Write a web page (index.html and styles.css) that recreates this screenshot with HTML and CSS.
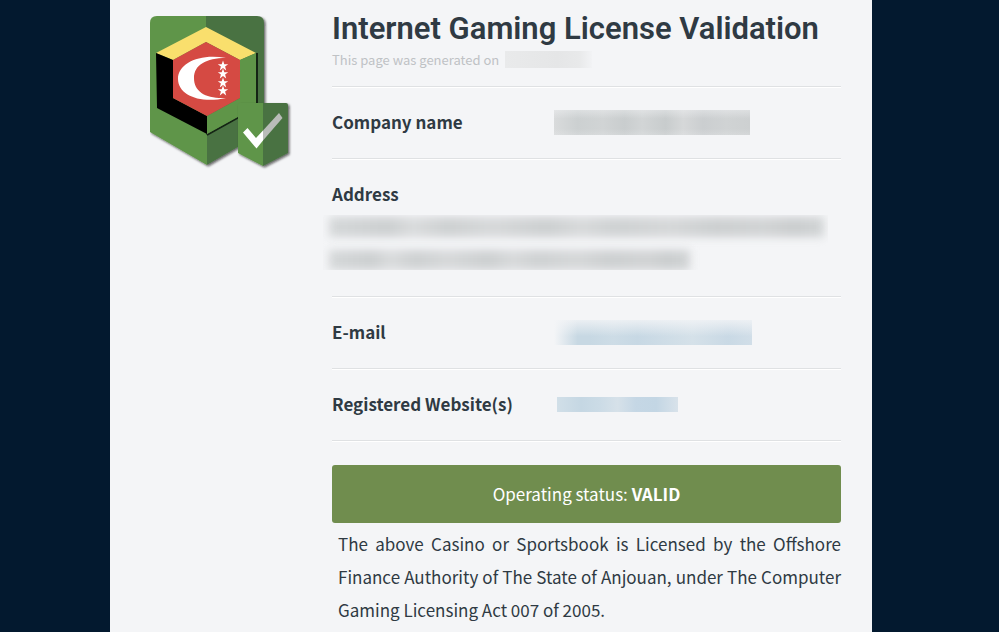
FILE: index.html
```html
<!DOCTYPE html>
<html lang="en">
<head>
  <meta charset="UTF-8">
  <meta name="viewport" content="width=device-width, initial-scale=1.0">
  <title>Internet Gaming License Validation</title>
  <link rel="stylesheet" href="styles.css">
</head>
<body>
  <div class="page">
    <aside class="seal">
      <svg viewBox="0 0 150 160" width="150" height="160" role="img" aria-label="Verified license seal">
        <defs>
          <filter id="shadow" x="-10%" y="-10%" width="125%" height="125%">
            <feDropShadow dx="1.5" dy="1.5" stdDeviation="1.2" flood-color="#111" flood-opacity=".65"/>
          </filter>
          <clipPath id="shield"><path d="M7 0H107Q114 0 114 7V116L57 149L0 116V7Q0 0 7 0Z"/></clipPath>
          <path id="star" d="M0-5.4L1.3-1.7H5.2L2.1.6L3.2 4.4L0 2.1L-3.2 4.4L-2.1.6L-5.2-1.7H-1.3Z"/>
        </defs>
        <!-- shield -->
        <g filter="url(#shadow)">
          <g clip-path="url(#shield)">
            <path d="M0 0H57V149H0Z" fill="#5f9548"/>
            <path d="M56 0H114V116L57 149V119H56Z" fill="#4a7243"/>
          </g>
        </g>
        <!-- cube -->
        <path d="M57 119L107 91V37" fill="none" stroke="#142414" stroke-width="2"/>
        <path d="M56 11L106 37L90 44L56 26L23 44L6 37Z" fill="#f9df6d"/>
        <path d="M6 37L23 44V82L57 100V118L7 92Z" fill="#000"/>
        <path d="M106 37L90 44V82L57 100V118L106 91Z" fill="#5f9548"/>
        <path d="M56 26L90 44V82L57 100L23 82V44Z" fill="#d54a43"/>
        <path d="M76 42C50 37 28 47 28 63C28 79 50 88 76 82C56 83 44 76 44 62C44 49 56 42 76 42Z" fill="#fff"/>
        <g fill="#fff">
          <use href="#star" x="73" y="50"/><use href="#star" x="73" y="58"/>
          <use href="#star" x="73" y="67"/><use href="#star" x="73" y="75"/>
        </g>
        <!-- check badge -->
        <g filter="url(#shadow)">
          <path d="M90 87H113V150L88 137V89Q88 87 90 87Z" fill="#5f9548"/>
          <path d="M113 87H136Q138 87 138 89V137L113 150Z" fill="#4a7243"/>
        </g>
        <path d="M113 114.500L129 97L132.500 102L113 124.500Z" fill="#b9bcb9"/>
        <path d="M93 116.500L97.500 112L106 122L113 114.500V124.500L106.500 132.500Z" fill="#fff"/>
      </svg>
    </aside>

    <main class="content">
      <header class="intro">
        <h1>Internet Gaming License Validation</h1>
        <p>This page was generated on <span class="mask mask-date"></span></p>
      </header>

      <dl class="details">
        <div class="row">
          <dt>Company name</dt>
          <dd><span class="mask mask-name"></span></dd>
        </div>
        <div class="row row-stacked">
          <dt>Address</dt>
          <dd class="mask-address">
            <span class="mask-line"></span>
            <span class="mask-line short"></span>
          </dd>
        </div>
        <div class="row">
          <dt>E-mail</dt>
          <dd><span class="mask mask-email"></span></dd>
        </div>
        <div class="row">
          <dt>Registered Website(s)</dt>
          <dd><span class="mask mask-site"></span></dd>
        </div>
      </dl>

      <div class="status">Operating status: <strong>VALID</strong></div>
      <p class="notice">The above Casino or Sportsbook is Licensed by the Offshore Finance Authority of The State of Anjouan, under The Computer Gaming Licensing Act 007 of 2005.</p>
    </main>
  </div>
</body>
</html>
```
FILE: styles.css
```css
* {
  box-sizing: border-box;
}
body {
  margin: 0;
  padding: 0 17px 0 0;
  background-color: #03192f;
  color: #2f3a43;
  font-family: "Noto Sans CJK SC", "Noto Sans", sans-serif;
  font-size: 17px;
  line-height: 33px;
}
.page {
  display: flex;
  max-width: 762px;
  min-height: 100vh;
  margin: 0 auto;
  padding: 0 31px 0 40px;
  background-color: #f4f5f7;
}
.seal {
  flex: 0 0 182px;
  padding-top: 16px;
}
.seal svg {
  display: block;
}
.content {
  flex: 1;
  min-width: 0;
}
.intro {
  padding: 9px 0 16px;
}
h1 {
  margin: 0;
  font-family: Roboto, sans-serif;
  font-size: 31px;
  font-weight: 600;
  line-height: 40px;
  white-space: nowrap;
}
.intro p {
  display: flex;
  align-items: center;
  margin: 0;
  color: #bfc2c5;
  font-size: 13px;
  line-height: 21px;
}
.intro,
.row {
  border-bottom: 1px solid #dfe1e3;
  box-shadow: 0 1px #fff;
}
.details {
  margin: 0;
}
.row {
  display: flex;
  padding: 18px 0 20px;
}
dt {
  flex: 0 0 222px;
  font-weight: bold;
}
dd {
  display: flex;
  align-items: center;
  margin: 0;
  padding-top: 2px;
}
.row-stacked {
  display: block;
}

/* hidden values */
.mask {
  height: 25px;
}
.mask-date {
  width: 87px;
  height: 17px;
  margin-left: 6px;
  background: linear-gradient(90deg, #e9eaeb, #e5e6e7 60%, #e8e9ea 85%, #f2f3f5);
}
.mask-name {
  width: 196px;
  background:
    linear-gradient(#f4f5f766, #f4f5f700 35%, #f4f5f700 75%, #f4f5f733),
    linear-gradient(90deg, #d9dbdc, #ccd0d1 12%, #d1d4d5 25%, #c9cdce 36%, #d2d5d6 45%, #c8cccd 57%, #d6d8d9 66%, #cbced0 76%, #d0d3d4 88%, #cdd0d1);
}
.mask-address {
  display: block;
  height: 55px;
  margin: 5px 13px 6px -9px;
  padding: 2px 4px 0 6px;
  overflow: hidden;
}
.mask-line {
  display: block;
  height: 20px;
  margin-bottom: 13px;
  background: linear-gradient(90deg, #d5d8d9, #cdd0d1 12%, #dadcdd 17%, #ced1d2 24%, #d7d9da 33%, #cdd0d1 44%, #d8dadb 51%, #cfd2d3 58%, #d6d8d9 69%, #cdd0d1 78%, #d2d4d5 88%, #cbcecf 94%, #d2d5d6);
  filter: blur(4px);
}
.mask-line.short {
  width: 73%;
}
.mask-email {
  width: 198px;
  background:
    linear-gradient(90deg, #f4f5f7, #f4f5f700 12%),
    linear-gradient(#f4f5f7cc, #f4f5f700 65%),
    linear-gradient(90deg, #c7d8e3 18%, #cddce6 30%, #c7d8e4 42%, #d5e1e9 70%, #c9d9e5 88%, #d1dee8);
}
.mask-site {
  width: 121px;
  height: 15px;
  margin-left: 3px;
  background: linear-gradient(90deg, #d1dfe8, #c5d7e3 20%, #cbdbe6 35%, #d6e1e9 50%, #c5d7e5 65%, #c3d6e4 82%, #d8e2ea);
}

.status {
  margin-top: 24px;
  padding: 12px 20px 13px;
  border-radius: 3px;
  background-color: #708d4e;
  color: #fff;
  text-align: center;
}
.notice {
  margin: 0;
  padding: 4px 0 4px 6px;
  text-align: justify;
}
```
